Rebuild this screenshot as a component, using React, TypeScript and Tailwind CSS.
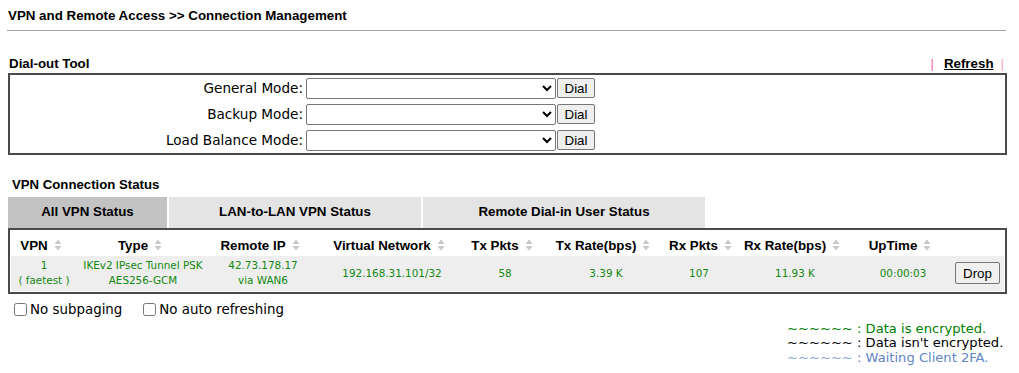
import React from 'react';

const SortIcon: React.FC = () => (
    <svg width="8" height="12" viewBox="0 0 8 12" className="inline-block ml-[6px] align-[-1px]">
        <path d="M4 0.5 L7.5 5 L0.5 5 Z" fill="#c8c8c8" />
        <path d="M4 11.5 L7.5 7 L0.5 7 Z" fill="#c8c8c8" />
    </svg>
);

const modes = ['General Mode:', 'Backup Mode:', 'Load Balance Mode:'];

const columns = [
    { label: 'VPN', w: 'w-[66px]' },
    { label: 'Type', w: 'w-[132px]' },
    { label: 'Remote IP', w: 'w-[108px]' },
    { label: 'Virtual Network', w: 'w-[150px]' },
    { label: 'Tx Pkts', w: 'w-[76px]' },
    { label: 'Tx Rate(bps)', w: 'w-[126px]' },
    { label: 'Rx Pkts', w: 'w-[60px]' },
    { label: 'Rx Rate(bps)', w: 'w-[132px]' },
    { label: 'UpTime', w: 'w-[84px]' },
];

const tabs = [
    { label: 'All VPN Status', w: 'w-[159px]', bg: 'bg-[#c3c3c3]' },
    { label: 'LAN-to-LAN VPN Status', w: 'w-[252px]', bg: 'bg-[#e4e4e4]' },
    { label: 'Remote Dial-in User Status', w: 'w-[282px]', bg: 'bg-[#e4e4e4]' },
];

const App: React.FC = () => {
    return (
        <div className="w-[1019px] h-[373px] bg-white px-[8px] pt-[8px] text-black font-['Liberation_Sans',Arial,sans-serif] overflow-hidden">
            <h1 className="text-[13.33px] font-bold leading-[16px] pb-[6px] border-b border-[#a0a0a0] w-[999px] -ml-[1px] pl-[1px]">
                VPN and Remote Access &gt;&gt; Connection Management
            </h1>

            {/* Dial-out tool */}
            <div className="mt-[25px] flex items-end justify-between w-[996px]">
                <span className="text-[13.33px] font-bold leading-[16px] pl-[1px]">Dial-out Tool</span>
                <span className="text-[13.33px] font-bold leading-[16px] flex items-center">
                    <span className="text-[#f26aa8] font-normal">|</span>
                    <a className="underline ml-[10px] mr-[7px] cursor-pointer">Refresh</a>
                    <span className="text-[#f6a0c8] font-normal">|</span>
                </span>
            </div>
            <div className="mt-[1px] w-[999px] h-[82px] border-2 border-[#4a4a4a] flex flex-col pt-[3px] gap-[6px] font-['DejaVu_Sans',Verdana,sans-serif]">
                {modes.map(m => (
                    <div key={m} className="flex items-center h-[20px]">
                        <label className="w-[296px] text-right text-[13.6px] pr-[3px]">{m}</label>
                        <select className="w-[250px] h-[21px] bg-white border border-[#767676] rounded-[2px] text-[13px]">
                            <option></option>
                        </select>
                        <button className="ml-[1px] w-[38px] h-[20px] bg-[#efefef] border border-[#767676] rounded-[2px] text-[13.33px] font-['Liberation_Sans',Arial,sans-serif]">
                            Dial
                        </button>
                    </div>
                ))}
            </div>

            {/* VPN connection status */}
            <div className="mt-[22px] pl-[4px] text-[13.2px] font-bold leading-[16px]">VPN Connection Status</div>
            <div className="mt-[4px] flex gap-[2px] w-[999px]">
                {tabs.map(t => (
                    <div key={t.label} className={`${t.w} ${t.bg} h-[31px] pb-[1px] flex items-center justify-center text-[13.33px] font-bold`}>
                        {t.label}
                    </div>
                ))}
            </div>
            <div className="w-[999px] border-2 border-[#4a4a4a] p-[1px]">
                <table className="w-full table-fixed border-collapse">
                    <thead>
                        <tr className="h-[24px]">
                            {columns.map(c => (
                                <th key={c.label} className={`${c.w} text-[13.33px] font-bold text-center whitespace-nowrap pt-[5px] pr-[6px] overflow-visible`}>
                                    {c.label}
                                    <SortIcon />
                                </th>
                            ))}
                            <th />
                        </tr>
                    </thead>
                    <tbody>
                        <tr className="bg-[#eeeeee] h-[35px] text-[#118811] text-[10.4px] text-center leading-[15px] font-['DejaVu_Sans',Tahoma,sans-serif]">
                            <td>1<br />( faetest )</td>
                            <td className="whitespace-nowrap">IKEv2 IPsec Tunnel PSK<br />AES256-GCM</td>
                            <td>42.73.178.17<br />via WAN6</td>
                            <td>192.168.31.101/32</td>
                            <td>58</td>
                            <td>3.39 K</td>
                            <td>107</td>
                            <td>11.93 K</td>
                            <td>00:00:03</td>
                            <td className="text-right pr-[4px]">
                                <button className="w-[45px] h-[22px] bg-[#f0f0f0] border border-[#767676] rounded-[2px] text-[13.33px] text-black font-['Liberation_Sans',Arial,sans-serif]">
                                    Drop
                                </button>
                            </td>
                        </tr>
                    </tbody>
                </table>
            </div>

            {/* options */}
            <div className="mt-[7px] pl-[6px] flex items-center text-[13.4px] leading-[18px] font-['DejaVu_Sans',Verdana,sans-serif]">
                <label className="flex items-center">
                    <input type="checkbox" className="w-[13px] h-[13px] m-0 mr-[3px]" />
                    No subpaging
                </label>
                <label className="flex items-center ml-[21px]">
                    <input type="checkbox" className="w-[13px] h-[13px] m-0 mr-[3px]" />
                    No auto refreshing
                </label>
            </div>

            <div className="flex justify-end w-[999px] mt-[3px]">
                <div className="w-[220px] text-[13.1px] leading-[14.5px] whitespace-nowrap font-['DejaVu_Sans',Verdana,sans-serif]">
                    <div className="text-[#008000]">~~~~~~ : Data is encrypted.</div>
                    <div className="text-black">~~~~~~ : Data isn't encrypted.</div>
                    <div className="text-[#5f85c6]"><span className="text-[#8aa6d8]">~~~~~~</span> : Waiting Client 2FA.</div>
                </div>
            </div>
        </div>
    );
};

export default App;
